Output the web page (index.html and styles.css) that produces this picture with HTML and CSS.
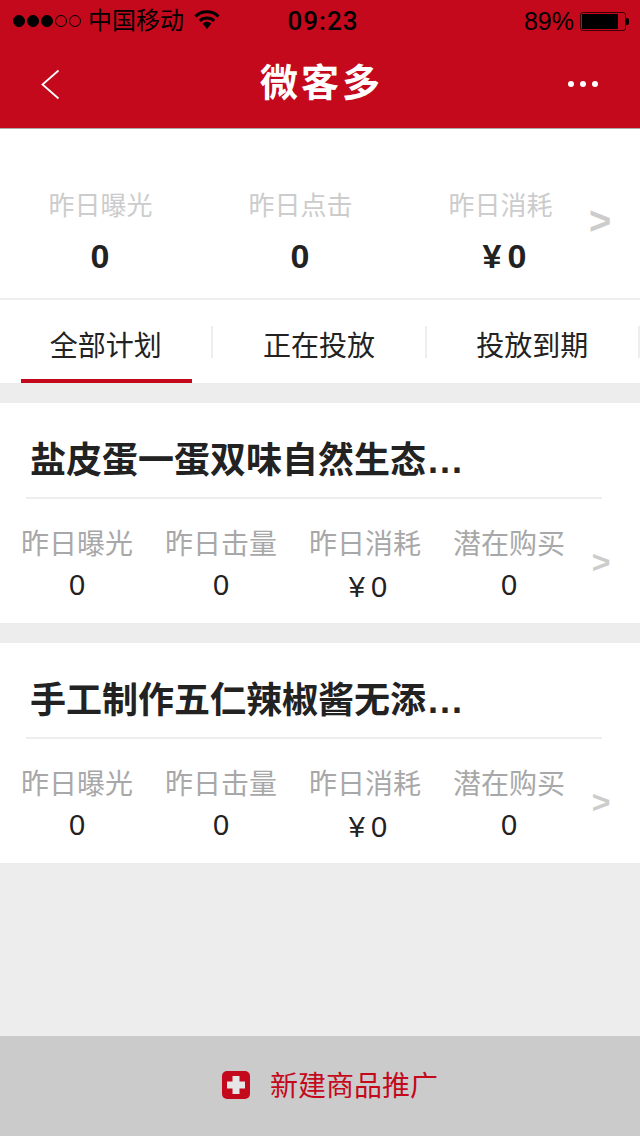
FILE: index.html
```html
<!DOCTYPE html>
<html lang="zh-CN">
<head>
<meta charset="utf-8">
<title>微客多</title>
<link rel="stylesheet" href="styles.css">
</head>
<body>
<div class="page">
  <header class="top">
    <div class="status">
      <div class="status-left">
        <div class="signal"><i class="on"></i><i class="on"></i><i class="on"></i><i></i><i></i></div>
        <span class="carrier">中国移动</span>
        <svg class="wifi" width="26" height="20" viewBox="0 0 26 20"><path d="M1.5 6.5 A16.5 16.5 0 0 1 24.5 6.5" fill="none" stroke="#000" stroke-width="3"/><path d="M5.8 10.8 A10.5 10.5 0 0 1 20.2 10.8" fill="none" stroke="#000" stroke-width="3"/><path d="M8.6 13.6 A6.4 6.4 0 0 1 17.4 13.6 L13 19 Z" fill="#000"/></svg>
      </div>
      <div class="time">09:23</div>
      <div class="status-right">
        <span class="pct">89%</span>
        <div class="battery"><div class="battery-level"></div></div>
        <div class="battery-cap"></div>
      </div>
    </div>
    <div class="nav">
      <svg class="back" width="20" height="32" viewBox="0 0 20 32"><path d="M17.5 1.5 L1.5 15.5 L17.5 29.5" fill="none" stroke="#fff" stroke-width="1.8"/></svg>
      <h1 class="title">微客多</h1>
      <div class="more"><i></i><i></i><i></i></div>
    </div>
  </header>

  <section class="summary">
    <div class="summary-col"><div class="summary-label">昨日曝光</div><div class="summary-value">0</div></div>
    <div class="summary-col"><div class="summary-label">昨日点击</div><div class="summary-value">0</div></div>
    <div class="summary-col"><div class="summary-label">昨日消耗</div><div class="summary-value money">¥<span class="gap"></span>0</div></div>
    <div class="summary-arrow">&gt;</div>
  </section>

  <nav class="tabs">
    <div class="tab active"><span class="tab-label">全部计划</span></div>
    <div class="tab"><span class="tab-label">正在投放</span></div>
    <div class="tab"><span class="tab-label">投放到期</span></div>
  </nav>

  <article class="card">
    <h2 class="card-title">盐皮蛋一蛋双味自然生态<span class="dots">...</span></h2>
    <div class="card-stats">
      <div class="stat"><div class="stat-label">昨日曝光</div><div class="stat-value">0</div></div>
      <div class="stat"><div class="stat-label">昨日击量</div><div class="stat-value">0</div></div>
      <div class="stat"><div class="stat-label">昨日消耗</div><div class="stat-value money">¥<span class="gap"></span>0</div></div>
      <div class="stat"><div class="stat-label">潜在购买</div><div class="stat-value">0</div></div>
      <div class="card-arrow">&gt;</div>
    </div>
  </article>

  <article class="card">
    <h2 class="card-title">手工制作五仁辣椒酱无添<span class="dots">...</span></h2>
    <div class="card-stats">
      <div class="stat"><div class="stat-label">昨日曝光</div><div class="stat-value">0</div></div>
      <div class="stat"><div class="stat-label">昨日击量</div><div class="stat-value">0</div></div>
      <div class="stat"><div class="stat-label">昨日消耗</div><div class="stat-value money">¥<span class="gap"></span>0</div></div>
      <div class="stat"><div class="stat-label">潜在购买</div><div class="stat-value">0</div></div>
      <div class="card-arrow">&gt;</div>
    </div>
  </article>

  <footer class="bottom">
    <svg class="plus" width="28" height="28" viewBox="0 0 28 28"><rect width="28" height="28" rx="5" fill="#c4091c"/><path d="M10.5 5 H17.5 V10.5 H23 V17.5 H17.5 V23 H10.5 V17.5 H5 V10.5 H10.5 Z" fill="#e6e6e6"/></svg>
    <span class="bottom-label">新建商品推广</span>
  </footer>
</div>
</body>
</html>
```

FILE: styles.css
```css
* { box-sizing: border-box; }
html, body { margin: 0; padding: 0; }
body {
  font-family: "Liberation Sans", "Noto Sans CJK SC", sans-serif;
  background: #ededed;
}
.page {
  width: 640px;
  height: 1136px;
  display: flex;
  flex-direction: column;
  overflow: hidden;
  background: #ededed;
}
.top {
  height: 129px;
  background: #c4091c;
  border-bottom: 1px solid #a9a9a9;
  flex: none;
}
.status {
  height: 40px;
  display: grid;
  grid-template-columns: 1fr auto 1fr;
  align-items: center;
  color: #000;
  padding: 1px 11px 0 13px;
}
.status-left { display: flex; align-items: center; }
.signal { display: flex; gap: 2px; width: 75px; }
.signal i {
  width: 12px;
  height: 12px;
  border-radius: 50%;
  border: 1px solid #000;
}
.signal i.on { background: #000; }
.carrier { font-size: 24px; line-height: 40px; }
.wifi { margin-left: 10px; margin-top: -2px; }
.time {
  font-family: Roboto, "Liberation Sans", sans-serif;
  font-size: 26px;
  font-weight: 500;
  letter-spacing: 1px;
  margin-left: 4px;
}
.status-right { display: flex; align-items: center; justify-content: flex-end; }
.pct { font-size: 25px; margin-right: 6px; }
.battery {
  width: 46px;
  height: 19px;
  border: 1px solid #3a0006;
  border-radius: 3px;
  padding: 1px;
}
.battery-level { width: 36px; height: 15px; background: #000; }
.battery-cap { width: 3px; height: 7px; background: #000; border-radius: 0 2px 2px 0; }
.nav {
  height: 88px;
  display: grid;
  grid-template-columns: 1fr auto 1fr;
  align-items: center;
  padding: 0 42px 0 41px;
}
.back { margin-top: 1px; }
.title {
  margin: 0 0 2px 0;
  padding-left: 4px;
  font-size: 38px;
  font-weight: 700;
  color: #fff;
  letter-spacing: 3px;
  line-height: 48px;
}
.more { display: flex; gap: 6px; justify-content: flex-end; }
.more i { width: 6px; height: 6px; border-radius: 50%; background: #fff; }
.summary {
  height: 171px;
  flex: none;
  background: #fff;
  border-bottom: 2px solid #eee;
  display: flex;
  padding-top: 57px;
}
.summary-col { width: 200px; text-align: center; }
.summary-label { font-size: 26px; line-height: 40px; color: #ccc; padding-left: 1px; }
.summary-value { font-size: 34px; font-weight: 700; line-height: 40px; margin-top: 10px; color: #222; }
.summary-value.money { padding-left: 9px; }
.gap { display: inline-block; width: 6px; }
.summary-arrow {
  width: 40px;
  margin-left: -20px;
  text-align: center;
  font-size: 38px;
  font-weight: 700;
  color: #ccc;
  line-height: 44px;
  margin-top: 13px;
}
.tabs {
  height: 83px;
  flex: none;
  background: #fff;
  display: flex;
  margin-bottom: 20px;
}
.tab {
  width: 213.33px;
  padding: 0 21px;
  position: relative;
}
.tab::after {
  content: "";
  position: absolute;
  right: 0;
  top: 26px;
  width: 2px;
  height: 32px;
  background: #eee;
}
.tab-label {
  display: block;
  height: 83px;
  font-size: 28px;
  line-height: 94px;
  padding-right: 2px;
  text-align: center;
  color: #222;
}
.tab.active .tab-label { border-bottom: 4px solid #c4091c; }
.card {
  height: 220px;
  flex: none;
  background: #fff;
  margin-bottom: 20px;
}
.card-title {
  margin: 0 38px 0 26px;
  padding: 0 0 0 4px;
  height: 96px;
  font-size: 36px;
  font-weight: 700;
  line-height: 116px;
  color: #222;
  border-bottom: 2px solid #eee;
  white-space: nowrap;
}
.dots { letter-spacing: 2px; margin-left: 2px; }
.card-stats { display: flex; padding-left: 5px; padding-top: 26px; }
.stat { width: 144px; text-align: center; }
.stat-label { font-size: 28px; line-height: 40px; color: #a8a8a8; }
.stat-value { font-size: 29px; line-height: 42px; margin-top: -1px; color: #222; }
.stat-value.money { padding-top: 2px; padding-left: 6px; }
.card-arrow {
  width: 40px;
  text-align: center;
  font-size: 32px;
  font-weight: 700;
  color: #ccc;
  line-height: 40px;
  margin-top: 17px;
}
.bottom {
  margin-top: auto;
  height: 100px;
  flex: none;
  background: #cbcbcb;
  display: flex;
  align-items: center;
  padding: 2px 0 0 222px;
  gap: 20px;
}
.plus { margin-top: -4px; }
.bottom-label { font-size: 28px; color: #c4091c; line-height: 40px; }
```
